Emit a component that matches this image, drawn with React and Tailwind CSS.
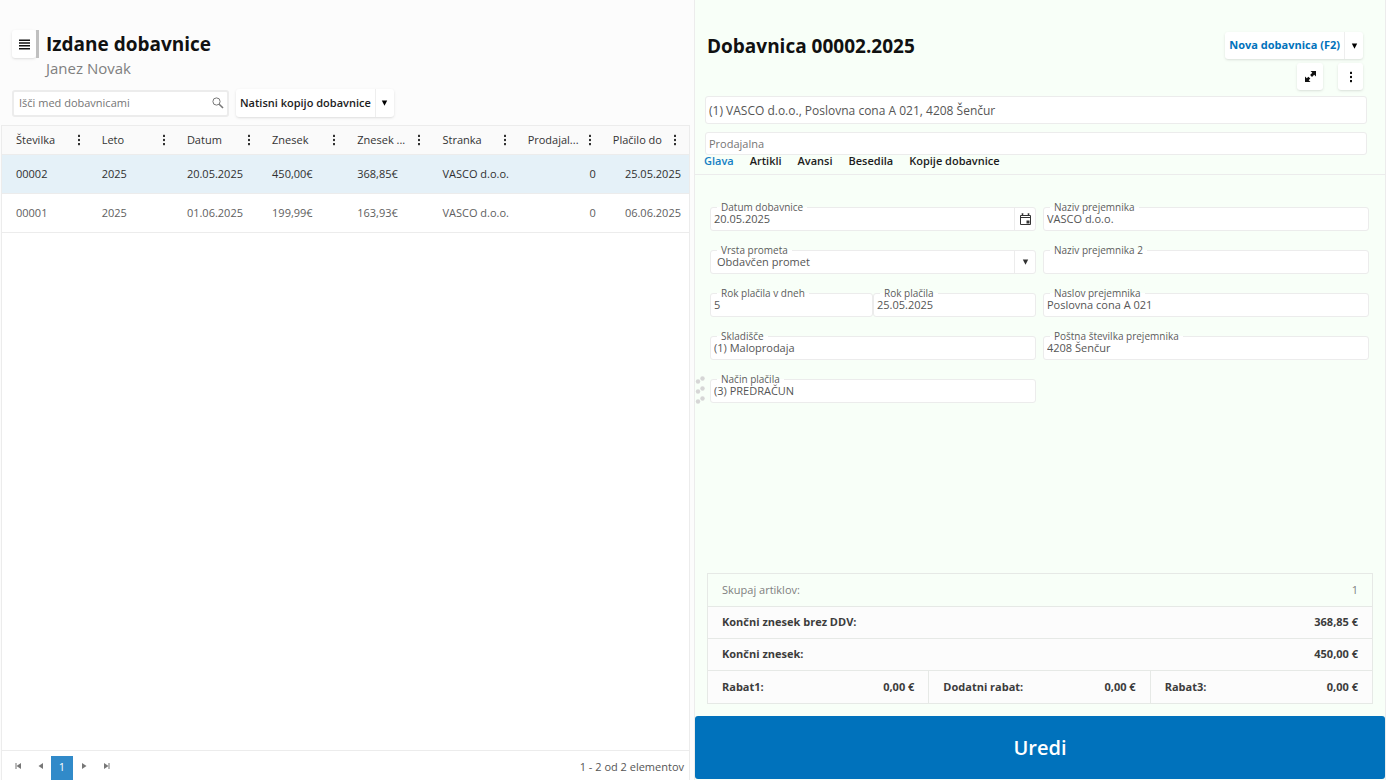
import { useState } from 'react';
import clsx from 'clsx';

const columns = [
  { key: 'number', title: 'Številka' },
  { key: 'year', title: 'Leto' },
  { key: 'date', title: 'Datum' },
  { key: 'amount', title: 'Znesek' },
  { key: 'net', title: 'Znesek ...' },
  { key: 'customer', title: 'Stranka' },
  { key: 'store', title: 'Prodajal...', right: true },
  { key: 'due', title: 'Plačilo do', right: true },
];

const rows = [
  { number: '00002', year: '2025', date: '20.05.2025', amount: '450,00€', net: '368,85€', customer: 'VASCO d.o.o.', store: '0', due: '25.05.2025' },
  { number: '00001', year: '2025', date: '01.06.2025', amount: '199,99€', net: '163,93€', customer: 'VASCO d.o.o.', store: '0', due: '06.06.2025' },
];

const tabs = ['Glava', 'Artikli', 'Avansi', 'Besedila', 'Kopije dobavnice'];

const Caret = ({ className }) => (
  <svg className={className} width="7" height="6" viewBox="0 0 7 6" fill="currentColor">
    <path d="M0.8 0.5h5.400L3.5 5.800z" />
  </svg>
);

const Dots = () => (
  <svg width="4" height="12" viewBox="0 0 4 12" fill="currentColor">
    <rect x="1" y="0.8" width="2" height="2.2" />
    <rect x="1" y="4.9" width="2" height="2.2" />
    <rect x="1" y="9" width="2" height="2.2" />
  </svg>
);

const PagerIcon = ({ flip, bar }) => (
  <svg width="7" height="8" viewBox="0 0 7 8" fill="currentColor" className={clsx(flip && 'rotate-180')}>
    {bar && <path d="M0.5 1h1v6h-1z" />}
    <path d="M6 1v6L1.5 4z" />
  </svg>
);

const Field = ({ id, label, value, className, children }) => (
  <div className={clsx('relative flex h-6 rounded-[3px] border border-[#ececec] bg-white', className)}>
    <label
      htmlFor={id}
      className="absolute -top-2 left-1.5 bg-linear-to-b from-[#f8fff8] from-50% to-white to-50% px-1 text-[10px] leading-3.5 whitespace-nowrap text-[#5c5c5c]"
    >
      {label}
    </label>
    {children || <input id={id} defaultValue={value} className="relative w-full min-w-0 px-[3px] text-[11px] outline-none" />}
  </div>
);

const Total = ({ label, value, className }) => (
  <div className={clsx('flex h-8 items-center justify-between px-3.5', className)}>
    <span>{label}</span>
    <span>{value}</span>
  </div>
);

const ListPanel = () => {
  const [selected, setSelected] = useState('00002');

  return (
    <section className="flex min-w-0 flex-1 flex-col">
      {/* Header */}
      <header className="flex items-start pt-[30px] pl-3">
        <button aria-label="Meni" className="flex h-7 w-6 items-center justify-center rounded-[3px] bg-white text-[#111] shadow">
          <svg width="11" height="11" viewBox="0 0 11 11" fill="currentColor">
            <path d="M0 0.500h11v1.500H0zM0 3.300h11v1.500H0zM0 6.100h11v1.500H0zM0 9h11v1.500H0z" />
          </svg>
        </button>
        <div className="h-7 w-[3px] bg-[#c0c0c0]" />
        <div className="pl-[7px]">
          <h1 className="text-[19px] leading-7 font-bold text-[#111]">Izdane dobavnice</h1>
          <p className="text-[15px] leading-5 font-medium text-[#808080]">Janez Novak</p>
        </div>
      </header>

      {/* Toolbar */}
      <div className="mt-[11px] flex items-center gap-[7px] pl-3">
        <div className="flex h-[27px] w-[217px] items-center rounded-[3px] border-2 border-[#ececec] bg-white pr-[3px] pl-[5px]">
          <input
            aria-label="Išči med dobavnicami"
            placeholder="Išči med dobavnicami"
            className="min-w-0 flex-1 text-[11px] outline-none placeholder:text-[#757575]"
          />
          <svg width="12" height="12" viewBox="0 0 12 12" fill="none" stroke="#777">
            <circle cx="4.5" cy="4.5" r="3.6" />
            <path d="M7.2 7.2L11 11" strokeWidth="1.6" />
          </svg>
        </div>
        <div className="flex h-7 rounded-[3px] bg-white text-[#1c1c1c] shadow">
          <button className="px-1 text-[11px] font-semibold">Natisni kopijo dobavnice</button>
          <button aria-label="Več možnosti" className="flex w-[19px] items-center justify-center border-l border-[#eee] text-black">
            <Caret />
          </button>
        </div>
      </div>

      {/* Grid */}
      <div className="mt-2 ml-px flex flex-1 flex-col border border-b-0 border-[#ececec] bg-white">
        <table className="w-full table-fixed border-collapse">
          <thead>
            <tr className="h-7 border-b border-[#ececec] bg-[#fafafa] text-[#333]">
              {columns.map((col, i) => (
                <th key={col.key} className={clsx('p-0 text-left text-[11px] font-medium', i > 0 && 'w-[12.4%]')}>
                  <div className={clsx('flex items-center justify-between pr-3', i > 0 ? 'pl-[9px]' : 'pl-3.5')}>
                    <span className="whitespace-nowrap">{col.title}</span>
                    <button aria-label={`Meni stolpca ${col.title}`}><Dots /></button>
                  </div>
                </th>
              ))}
            </tr>
          </thead>
          <tbody>
            {rows.map((row) => (
              <tr
                key={row.number}
                onClick={() => setSelected(row.number)}
                className={clsx('h-[39px] border-b border-[#ececec]', row.number === selected ? 'bg-[#e5f1f8] text-[#303030]' : 'text-[#606060]')}
              >
                {columns.map((col, i) => (
                  <td key={col.key} className={clsx('pt-0.5 pr-2 pb-0 text-[11px] whitespace-nowrap', i > 0 ? 'pl-[9px]' : 'pl-3.5', col.right && 'text-right')}>
                    {row[col.key]}
                  </td>
                ))}
              </tr>
            ))}
          </tbody>
        </table>

        {/* Pager */}
        <div className="mt-auto flex h-[30px] items-center border-t border-[#ececec] px-[5px] text-[#777]">
          <button aria-label="Prva stran" className="flex w-[22px] justify-center"><PagerIcon bar /></button>
          <button aria-label="Prejšnja stran" className="flex w-[22px] justify-center"><PagerIcon /></button>
          <button className="mt-1 h-6 w-[22px] bg-[#318ac9] text-[11px] text-white">1</button>
          <button aria-label="Naslednja stran" className="flex w-[22px] justify-center"><PagerIcon flip /></button>
          <button aria-label="Zadnja stran" className="flex w-[22px] justify-center"><PagerIcon flip bar /></button>
          <span className="mt-1 ml-auto text-[11px] text-[#555]">1 - 2 od 2 elementov</span>
        </div>
      </div>
    </section>
  );
};

const DetailPanel = () => {
  const [tab, setTab] = useState('Glava');

  return (
    <section className="relative flex min-w-0 flex-1 flex-col border-x border-[#ececec] bg-[#f8fff8]">
      {/* Title and actions */}
      <header className="flex items-start justify-between pt-8 pr-[22px] pl-3">
        <h2 className="text-[19px] leading-7 font-bold text-[#111]">Dobavnica 00002.2025</h2>
        <div className="flex flex-col items-end gap-1">
          <div className="flex h-[27px] rounded-[3px] bg-white shadow">
            <button className="px-1 text-[11px] font-bold text-[#0072bc]">Nova dobavnica (F2)</button>
            <button aria-label="Več možnosti" className="flex w-[19px] items-center justify-center border-l border-[#eee] text-black">
              <Caret />
            </button>
          </div>
          <div className="flex gap-[15px]">
            <button aria-label="Razširi" className="flex h-[27px] w-[26px] items-center justify-center rounded-[3px] bg-white text-[#111] shadow">
              <svg width="11" height="11" viewBox="0 0 11 11" fill="currentColor">
                <path d="M5.5 0H11v5.500L9.200 3.700 7 5.900 5.100 4 7.300 1.800zM5.500 11H0V5.500l1.800 1.800L3.400 5.700 5.300 7.600 3.700 9.200z" />
              </svg>
            </button>
            <button aria-label="Meni dobavnice" className="flex h-[27px] w-[25px] items-center justify-center rounded-[3px] bg-white text-[#111] shadow">
              <Dots />
            </button>
          </div>
        </div>
      </header>

      <div className="mt-1.5 flex flex-col gap-2 pr-[18px] pl-2.5">
        <input
          aria-label="Stranka"
          defaultValue="(1) VASCO d.o.o., Poslovna cona A 021, 4208 Šenčur"
          className="h-7 rounded-[3px] border border-[#ececec] bg-white px-[3px] text-xs text-[#555] outline-none"
        />
        <input
          aria-label="Prodajalna"
          placeholder="Prodajalna"
          className="h-[23px] rounded-[3px] border border-[#ececec] bg-white px-[3px] text-[11px] outline-none placeholder:text-[#757575]"
        />
      </div>

      {/* Tabs */}
      <nav className="flex h-[19px] items-start gap-4 pl-[9px] text-[11px] leading-3 font-semibold text-[#1c1c1c]">
        {tabs.map((name) => (
          <button key={name} onClick={() => setTab(name)} className={clsx(name === tab && 'text-[#1480c4]')}>
            {name}
          </button>
        ))}
      </nav>

      {/* Form */}
      <div className="flex flex-1 flex-col border-t border-[#ececec] pr-3">
        <form className="grid grid-cols-2 gap-x-[7px] gap-y-[19px] pt-8 pr-1 pl-[15px] text-[#555]">
          <Field id="date" label="Datum dobavnice">
            <input id="date" defaultValue="20.05.2025" className="relative min-w-0 flex-1 px-[3px] text-[11px] outline-none" />
            <button type="button" aria-label="Izberi datum" className="flex w-[21px] items-center justify-center border-l border-[#ececec] text-[#333]">
              <svg width="11" height="12" viewBox="0 0 11 12" fill="none" stroke="currentColor">
                <path d="M0.500 2.500h10v9H0.500zM0.500 4.500h10" />
                <path d="M2.500 0.500v2M8.500 0.500v2M1.500 1h2M7.500 1h2" />
                <path d="M6.500 7.500h3v3h-3z" fill="currentColor" stroke="none" />
              </svg>
            </button>
          </Field>
          <Field id="recipient" label="Naziv prejemnika" value="VASCO d.o.o." />
          <Field id="traffic" label="Vrsta prometa">
            <select id="traffic" className="relative min-w-0 flex-1 appearance-none px-1.5 text-[11px] outline-none">
              <option>Obdavčen promet</option>
            </select>
            <span className="flex w-[21px] items-center justify-center border-l border-[#ececec] text-[#333]">
              <Caret />
            </span>
          </Field>
          <Field id="recipient2" label="Naziv prejemnika 2" value="" />
          <div className="flex">
            <Field id="dueDays" label="Rok plačila v dneh" value="5" className="flex-1" />
            <Field id="dueDate" label="Rok plačila" value="25.05.2025" className="flex-1" />
          </div>
          <Field id="address" label="Naslov prejemnika" value="Poslovna cona A 021" />
          <Field id="warehouse" label="Skladišče" value="(1) Maloprodaja" />
          <Field id="postcode" label="Poštna številka prejemnika" value="4208 Šenčur" />
          <Field id="payment" label="Način plačila" value="(3) PREDRAČUN" />
        </form>

        {/* Totals */}
        <div className="mt-auto mb-3 ml-3 border border-[#e6e9e6] bg-[#fcfcfc] text-[11px] font-bold text-[#3c3c3c]">
          <Total label="Skupaj artiklov:" value="1" className="bg-[#f8fff8] font-normal text-[#808080]" />
          <Total label="Končni znesek brez DDV:" value="368,85 €" className="border-t border-[#e6e9e6]" />
          <Total label="Končni znesek:" value="450,00 €" className="border-t border-[#e6e9e6]" />
          <div className="grid grid-cols-3 divide-x divide-[#e6e9e6] border-t border-[#e6e9e6]">
            <Total label="Rabat1:" value="0,00 €" />
            <Total label="Dodatni rabat:" value="0,00 €" />
            <Total label="Rabat3:" value="0,00 €" />
          </div>
        </div>
      </div>

      <button className="mb-px h-[63px] rounded-[3px] bg-[#0072bc] text-xl font-semibold text-white">Uredi</button>

      {/* Splitter handle */}
      <svg className="absolute top-[375px] left-0" width="10" height="30" viewBox="0 0 10 30" fill="#d6d6d6">
        {[0, 10, 20].map((y) => (
          <g key={y}>
            <circle cx="7.500" cy={y + 3.500} r="2.200" />
            <circle cx="3" cy={y + 6.500} r="2.200" />
          </g>
        ))}
      </svg>
    </section>
  );
};

const App = () => (
  <div className="flex h-screen gap-1 overflow-hidden bg-[#fcfcfc] font-['Open_Sans','Noto_Sans',sans-serif]">
    <ListPanel />
    <DetailPanel />
  </div>
);

export default App;
